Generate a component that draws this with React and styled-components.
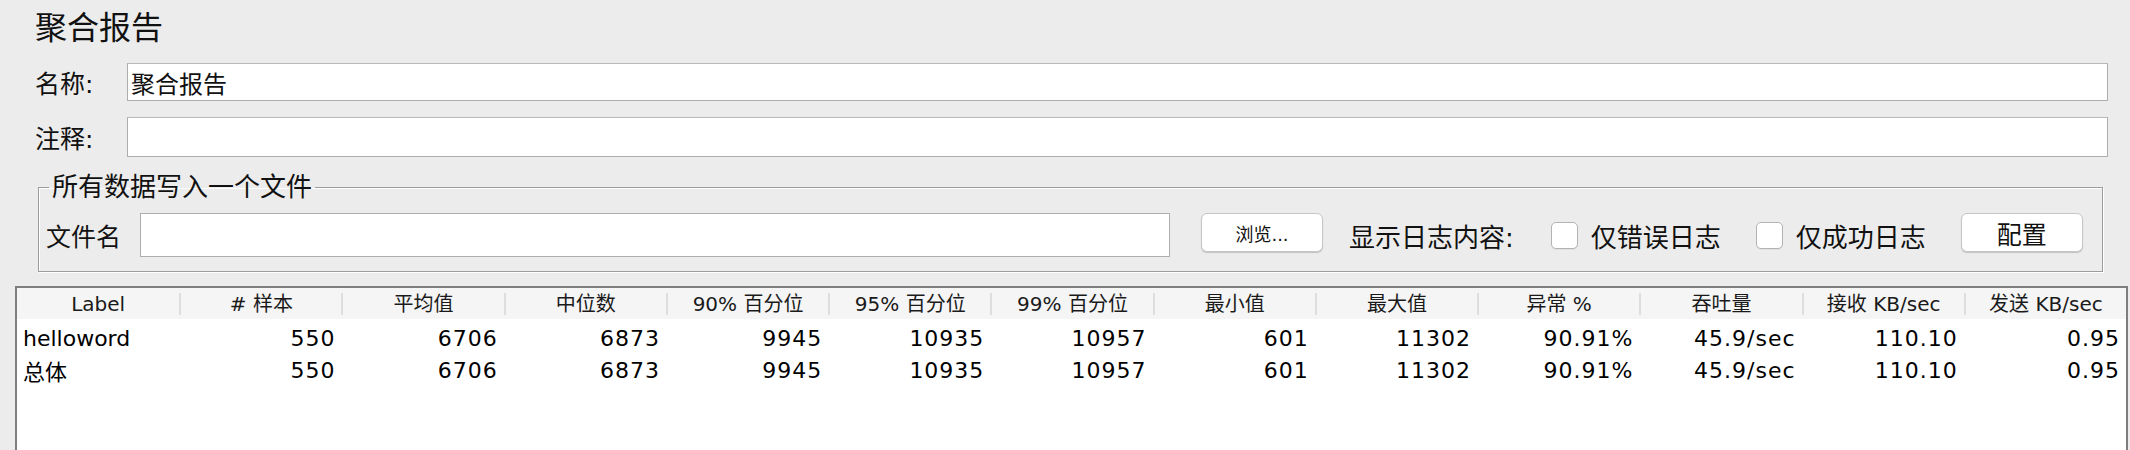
import React from "react";
import styled, { createGlobalStyle } from "styled-components";

const font = `"DejaVu Sans", "Noto Sans CJK SC", sans-serif`;

const Global = createGlobalStyle`
  html, body {
    margin: 0;
    background: #ececec;
  }
  body {
    font-family: ${font};
    color: #111;
  }
`;

const Page = styled.div`
  padding-top: 6px;
`;

const Top = styled.div`
  padding: 0 22px 0 35px;
`;

const Title = styled.h1`
  margin: 0;
  font-size: 32px;
  font-weight: normal;
  line-height: 44px;
  color: #111;
`;

const FormRow = styled.div`
  display: flex;
  align-items: center;
  margin-top: ${(p) => p.$top}px;
`;

const RowLabel = styled.span`
  width: 92px;
  flex-shrink: 0;
  font-size: 25px;
`;

const TextField = styled.div`
  flex: 1;
  height: ${(p) => p.$h}px;
  box-sizing: border-box;
  background: #fff;
  border: 1px solid #adadad;
  border-top-color: #b8b8b8;
  display: flex;
  align-items: center;
  padding-left: 3px;
  font-size: 24px;
`;

const Group = styled.fieldset`
  margin: 15px 5px 0 3px;
  padding: 11px 8px 14px 7px;
  border: 1px solid #9c9c9c;
  box-shadow: inset 1px 1px 0 #fff, 1px 1px 0 #fff;
  min-width: 0;
`;

const Legend = styled.legend`
  margin-left: 3px;
  padding: 0 3px;
  font-size: 26px;
  line-height: 30px;
`;

const FileRow = styled.div`
  display: flex;
  align-items: center;
  height: 44px;
`;

const FileLabel = styled.span`
  font-size: 25px;
`;

const FileInput = styled.div`
  width: 1030px;
  height: 44px;
  box-sizing: border-box;
  margin-left: 19px;
  background: #fff;
  border: 1px solid #adadad;
`;

const Button = styled.button`
  margin-left: ${(p) => p.$ml}px;
  width: 122px;
  height: 39px;
  margin-top: -5px;
  background: #fff;
  border: 1px solid #c6c6c6;
  border-radius: 6px;
  box-shadow: 0 1px 1px rgba(0, 0, 0, 0.18);
  font-family: ${font};
  font-size: ${(p) => p.$fs}px;
  color: #111;
  padding: 0;
`;

const LogLabel = styled.span`
  margin-left: 26px;
  font-size: 26px;
  white-space: nowrap;
`;

const CheckItem = styled.label`
  display: flex;
  align-items: center;
  gap: 13px;
  margin-left: ${(p) => p.$ml}px;
  font-size: 26px;
  white-space: nowrap;
`;

const Box = styled.span`
  width: 27px;
  height: 27px;
  box-sizing: border-box;
  background: #fff;
  border: 1px solid #b3b3b3;
  border-radius: 5px;
  box-shadow: 0 1px 0 rgba(0, 0, 0, 0.05);
`;

const Table = styled.div`
  margin: 14px 2px 0 15px;
  height: 170px;
  background: #fff;
  border: 2px solid #7e7e7e;
  border-bottom: none;
`;

const Grid = styled.div`
  display: grid;
  grid-template-columns: repeat(13, 1fr);
`;

const Head = styled(Grid)`
  height: 31px;
  background: #f5f5f5;
  align-items: center;
`;

const HeadCell = styled.div`
  height: 22px;
  line-height: 22px;
  text-align: center;
  font-size: 20px;
  white-space: nowrap;
  color: #1a1a1a;
  border-left: ${(p) => (p.$first ? "none" : "2px solid #dedede")};
`;

const Body = styled.div`
  padding-top: 3px;
`;

const Row = styled(Grid)`
  height: 32px;
  align-items: center;
`;

const Cell = styled.div`
  padding: 0 6px;
  font-size: 22px;
  white-space: nowrap;
  text-align: ${(p) => (p.$left ? "left" : "right")};
  letter-spacing: ${(p) => (p.$left ? 0 : 1)}px;
  color: #000;
`;

const columns = [
  "Label",
  "# 样本",
  "平均值",
  "中位数",
  "90% 百分位",
  "95% 百分位",
  "99% 百分位",
  "最小值",
  "最大值",
  "异常 %",
  "吞吐量",
  "接收 KB/sec",
  "发送 KB/sec",
];

const stats = ["550", "6706", "6873", "9945", "10935", "10957", "601", "11302", "90.91%", "45.9/sec", "110.10", "0.95"];
const rows = [
  ["helloword", ...stats],
  ["总体", ...stats],
];

export default function App() {
  return (
    <Page>
      <Global />
      <Top>
        <Title>聚合报告</Title>
        <FormRow $top={13}>
          <RowLabel>名称:</RowLabel>
          <TextField $h={38}>聚合报告</TextField>
        </FormRow>
        <FormRow $top={16}>
          <RowLabel>注释:</RowLabel>
          <TextField $h={40} />
        </FormRow>
      </Top>
      <Top>
        <Group>
          <Legend>所有数据写入一个文件</Legend>
          <FileRow>
            <FileLabel>文件名</FileLabel>
            <FileInput />
            <Button $ml={31} $fs={18}>浏览...</Button>
            <LogLabel>显示日志内容:</LogLabel>
            <CheckItem $ml={37}>
              <Box />
              仅错误日志
            </CheckItem>
            <CheckItem $ml={35}>
              <Box />
              仅成功日志
            </CheckItem>
            <Button $ml={35} $fs={25}>配置</Button>
          </FileRow>
        </Group>
      </Top>
      <Table>
        <Head>
          {columns.map((c, i) => (
            <HeadCell key={c} $first={i === 0}>{c}</HeadCell>
          ))}
        </Head>
        <Body>
          {rows.map((r) => (
            <Row key={r[0]}>
              {r.map((v, i) => (
                <Cell key={i} $left={i === 0}>{v}</Cell>
              ))}
            </Row>
          ))}
        </Body>
      </Table>
    </Page>
  );
}
